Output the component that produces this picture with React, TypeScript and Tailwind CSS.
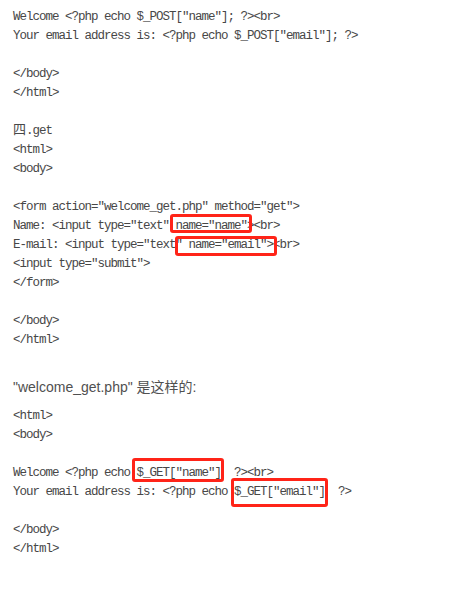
const mono = "font-['Liberation_Mono','Noto_Sans_CJK_SC',monospace] text-[12.5px] tracking-[-1px]";

type Mark = { left: number; top: number; width: number; height: number };

function Line({ text, mark }: { text: string; mark?: Mark }) {
  return (
    <div className="relative h-[19px] leading-[19px] whitespace-pre pl-[13px]">
      {text}
      {mark && (
        <span
          className="absolute border-[3px] border-[#ff2418] rounded-[3px]"
          style={{ left: mark.left, top: mark.top, width: mark.width, height: mark.height }}
        />
      )}
    </div>
  );
}

export default function App() {
  return (
    <div className="w-[451px] h-[607px] bg-white text-[#474747] overflow-hidden">
      <div className={`pt-[8px] ${mono}`}>
        <Line text={'Welcome <?php echo $_POST["name"]; ?><br>'} />
        <Line text={'Your email address is: <?php echo $_POST["email"]; ?>'} />
        <Line text="" />
        <Line text="</body>" />
        <Line text="</html>" />
        <Line text="" />
        <div className="h-[19px] leading-[19px] pl-[13px] whitespace-pre">
          <span className="font-['Noto_Sans_CJK_SC',sans-serif] text-[13px] tracking-normal leading-none">四</span>.get
        </div>
        <Line text="<html>" />
        <Line text="<body>" />
        <Line text="" />
        <Line text={'<form action="welcome_get.php" method="get">'} />
        <Line text={'Name: <input type="text" name="name"><br>'} mark={{ left: 170, top: -3, width: 82, height: 19 }} />
        <Line text={'E-mail: <input type="text" name="email"><br>'} mark={{ left: 175, top: 0, width: 102, height: 20 }} />
        <Line text={'<input type="submit">'} />
        <Line text="</form>" />
        <Line text="" />
        <Line text="</body>" />
        <Line text="</html>" />
      </div>

      <div className="mt-[25px] mb-[8px] h-[24px] leading-[24px] pl-[13px] text-[14px] text-[#505050] font-['Liberation_Sans','Noto_Sans_CJK_SC',sans-serif]">
        "welcome_get.php" 是这样的:
      </div>

      <div className={mono}>
        <Line text="<html>" />
        <Line text="<body>" />
        <Line text="" />
        <Line text={'Welcome <?php echo $_GET["name"]  ?><br>'} mark={{ left: 132, top: -6, width: 92, height: 24 }} />
        <Line text={'Your email address is: <?php echo $_GET["email"]  ?>'} mark={{ left: 231, top: -5, width: 97, height: 29 }} />
        <Line text="" />
        <Line text="</body>" />
        <Line text="</html>" />
      </div>
    </div>
  );
}
